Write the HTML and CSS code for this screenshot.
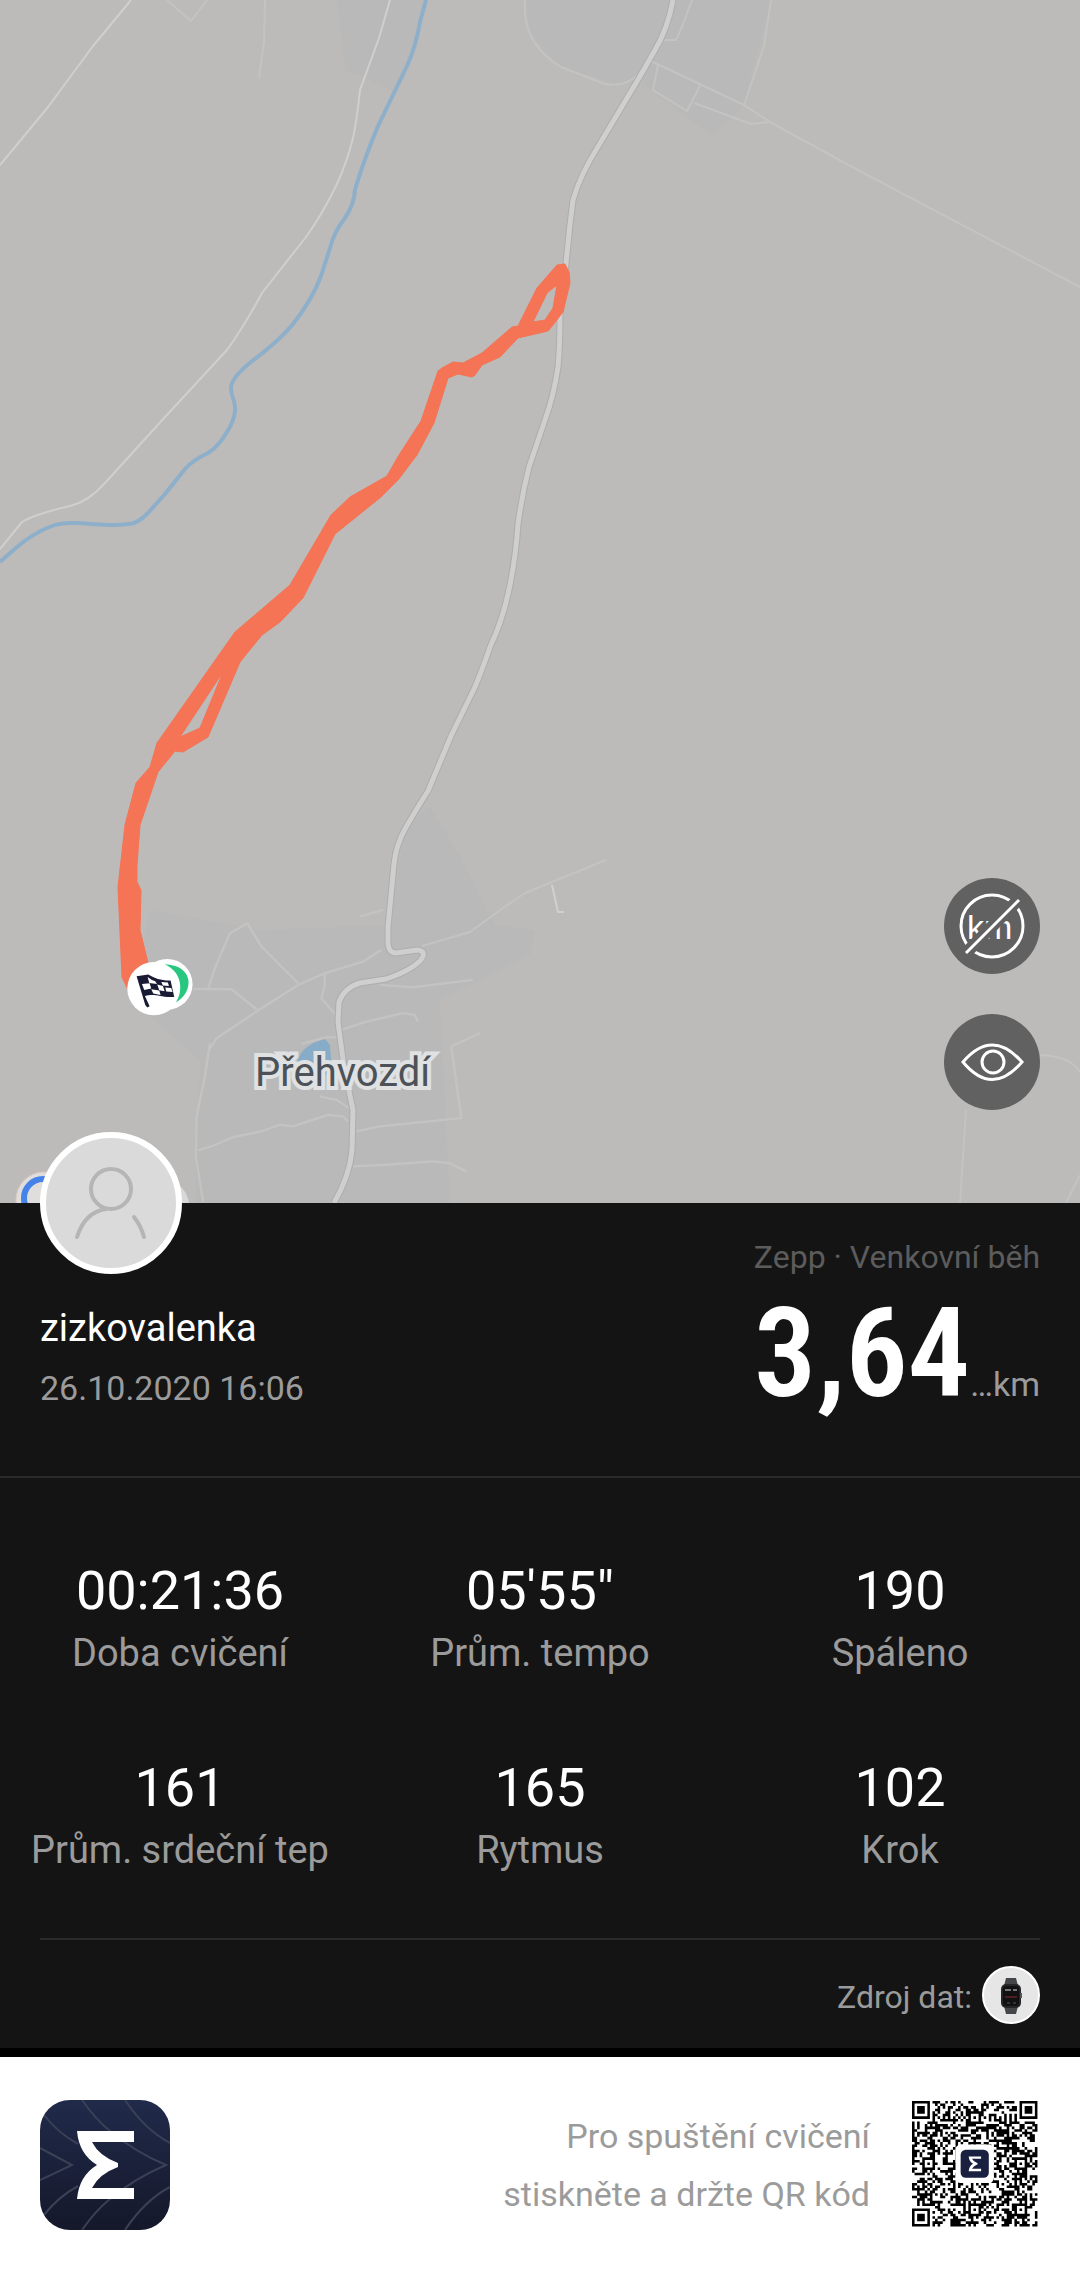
FILE: index.html
```html
<!DOCTYPE html>
<html lang="cs">
<head>
    <meta charset="utf-8">
    <meta name="viewport" content="width=device-width">
    <title>Zepp - Venkovní běh</title>
    <link rel="stylesheet" href="styles.css">
    <script src="script.js" defer></script>
</head>
<body>
    <!-- map: start -->
    <section class="map">
        <svg class="mapImg" viewBox="0 0 1080 1203" role="img" aria-label="Mapa trasy">
            <rect width="1080" height="1203" fill="#bcbbba"/>
            <!-- built-up areas -->
            <g fill="#bab9b9">
                <path d="M337 0H426L408 63 393 92 370 80 345 70z"/>
                <path d="M525 0H673L662 40 640 76 616 84 561 67 530 34z"/>
                <path d="M673 0H771L744 105 712 136 650 90 640 76z"/>
                <path d="M150 910L260 930 388 925 405 830 430 806 462 860 495 925 535 930 530 955 440 1000 450 1203H195L200 1060 130 1000z"/>
            </g>
            <!-- paths -->
            <g class="path">
                <path d="M167 0L191 21 207 0M265 0L264 42 259 78M525 0Q524 20 530 34 540 55 561 67L605 84Q625 88 640 73"/>
                <path d="M651 61L744 105M771 0L764 46 744 105 770 122 854 168 1080 287M692 0L682 27 676 40H664M658 65L653 90 687 111 701 84M694 103L751 124 770 122"/>
                <path d="M422 946L470 932 503 908 525 893 552 882 606 860M960 1203L966 1110M1040 1055Q1070 1056 1080 1072M1080 1175L1066 1203"/>
                <path d="M552 885L558 912H564" stroke="#d0d0d0"/>
            </g>
            <g class="path thick" transform="translate(80 900) scale(.333)">
                <path d="M340 267L455 268 530 328M385 265L405 205 450 100 503 70 545 140 655 250M385 455L410 415 530 335 655 255 735 220 850 185 905 150M735 220L735 255 725 295 768 345M665 432L740 412 780 413M390 430L375 530 350 650 348 770 370 908M355 752L400 738 460 712 545 695 600 675 640 680 745 645 790 650 805 665M830 695L900 680 1145 655 1115 440 1200 400M820 800L920 795 1060 785 1110 790 1160 815M785 390L860 365 970 340 1005 345 1015 365M900 255L1000 262 1180 240M720 590L770 600 808 625M840 50L910 30"/>
            </g>
            <!-- roads -->
            <path class="road thin" d="M131 0L93 46 48 107 0 165M390 0L379 38 360 90Q357 120 353 138 347 162 337 184 322 215 306 237L262 293Q245 325 227 350L165 417 105 483Q88 502 70 506 35 514 22 522L0 549"/>
            <path class="roadEdge" d="M673 0Q668 28 655 50L639 78 599 145Q580 175 573 200 569 230 566 264L560 314Q560 345 558 367 554 395 545 420L529 467Q522 495 518 524 516 555 510 585 503 620 490 647 484 665 475 687L451 736 428 791Q417 808 405 829 396 845 394 864L388 927V944Q389 953 396 953L417 950Q428 951 420 961 410 971 386 979L360 983Q345 987 339 1002L338 1022 344 1067 353 1110 352 1150Q350 1175 334 1203"/>
            <path class="road" d="M673 0Q668 28 655 50L639 78 599 145Q580 175 573 200 569 230 566 264L560 314Q560 345 558 367 554 395 545 420L529 467Q522 495 518 524 516 555 510 585 503 620 490 647 484 665 475 687L451 736 428 791Q417 808 405 829 396 845 394 864L388 927V944Q389 953 396 953L417 950Q428 951 420 961 410 971 386 979L360 983Q345 987 339 1002L338 1022 344 1067 353 1110 352 1150Q350 1175 334 1203"/>
            <!-- water -->
            <path class="river" d="M426 0L420 22Q416 46 407 66L378 126Q362 165 355 190 354 205 345 218 334 232 330 248L321 276Q312 300 293 324 280 340 251 362 231 378 231 388C231 398 236 400 235 411Q234 421 227 432 218 447 208 453 193 460 185 469L165 494 148 513Q137 524 129 524C105 527 95 523 72 523Q60 523 52 526 35 532 17 547L0 562"/>
            <path d="M298 1060Q302 1045 325 1039L330 1045 332 1075H298z" fill="#87acc8"/>
            <text class="place" x="255" y="1086">Přehvozdí</text>
            <!-- track -->
            <path class="track" fill-rule="evenodd" d="M565 264L557 265 537 288 518 326 512 327 482 353 463 363 453 362 442 368 438 371 421 421 399 455 387 476 350 497 331 515 290 585 235 632 157 743 150 767 136 783 125 825 118 887 122 977 128 990 150 985 148 963 140 930 141 890 137 882V865L140 825 158 772 175 751 183 752 208 737 240 662 262 635 280 622 303 598 335 534 381 497 398 480 417 455 434 423 448 378 458 374 472 377 475 375 482 365 500 357 518 338 548 331 553 325 563 312 570 283 569 272z
                M557 285L547 293 533 322 545 320 553 308zM223 672L200 728 180 737z"/>
            <g transform="translate(80 900) scale(.333)">
                <circle cx="262" cy="253" r="76" fill="#fff"/>
                <circle cx="222" cy="266" r="80" fill="#fff"/>
                <path d="M254 193C342 195 345 275 288 308 312 270 305 215 254 193z" fill="#27c77f"/>
                <path d="M170 229L205 224C225 236 245 243 272 242L283 291C240 294 230 280 195 288L209 319 202 323 196 315z" fill="#191a33"/>
                <g fill="#fff">
                    <path d="M203 231Q214 240 226 244L231 252 208 249zM244 246L264 248 267 258 249 257z"/>
                    <path d="M186 252L209 250 214 266 193 270zM232 254L249 258 254 274 238 271z"/>
                    <path d="M214 268L238 272 242 285 220 281zM256 263L274 264 278 276 259 275z"/>
                </g>
            </g>
            <!-- map provider badge -->
            <circle cx="44" cy="1200" r="28" fill="#e0dedd" stroke="#dcc9bf" stroke-width="1"/>
            <circle cx="43" cy="1198" r="19" fill="none" stroke="#4583e8" stroke-width="6"/>
            <path d="M176 1180L182 1188Q188 1195 189 1203H174z" fill="#d8d8d8"/>
        </svg>
        <div class="mapBtns">
            <button type="button" aria-label="Skrýt kilometry">
                <svg viewBox="0 0 96 96">
                    <circle cx="48" cy="48" r="31"/>
                    <text class="km" x="23" y="61">km</text>
                    <path class="cut" d="M18 79L79 17"/>
                    <path d="M22 75L75 22"/>
                </svg>
            </button>
            <button type="button" aria-label="Zobrazit mapu">
                <svg viewBox="0 0 96 96">
                    <path d="M19 48Q48 14 78 48 48 83 19 48z"/>
                    <circle cx="49" cy="48" r="11"/>
                </svg>
            </button>
        </div>
    </section>
    <!-- map: end -->
    <!-- panel: start -->
    <main class="panel">
        <section class="summary">
            <div class="user">
                <svg class="avatar" viewBox="0 0 142 142" role="img" aria-label="Profil">
                    <circle cx="71" cy="71" r="68" fill="#dadada" stroke="#fff" stroke-width="6"/>
                    <g fill="none" stroke="#b5b5b5" stroke-width="4" stroke-linecap="round">
                        <circle cx="71" cy="57" r="20"/>
                        <path d="M37 105Q45 80 66 77M94 85Q101 94 104 105"/>
                    </g>
                </svg>
                <h1>zizkovalenka</h1>
                <time datetime="2020-10-26T16:06">26.10.2020 16:06</time>
            </div>
            <div class="distance">
                <p class="type">Zepp · Venkovní běh</p>
                <p class="total"><strong>3,64</strong><span>…km</span></p>
            </div>
        </section>
        <dl class="stats">
            <div><dt>Doba cvičení</dt><dd>00:21:36</dd></div>
            <div><dt>Prům. tempo</dt><dd>05'55"</dd></div>
            <div><dt>Spáleno</dt><dd>190</dd></div>
            <div><dt>Prům. srdeční tep</dt><dd>161</dd></div>
            <div><dt>Rytmus</dt><dd>165</dd></div>
            <div><dt>Krok</dt><dd>102</dd></div>
        </dl>
        <div class="source">
            <span>Zdroj dat:</span>
            <svg viewBox="0 0 58 58" role="img" aria-label="Hodinky">
                <circle cx="29" cy="29" r="28" fill="#e6e6e6" stroke="#fff" stroke-width="2"/>
                <path d="M24 12H34L36 20H22zM22 40H36L34 48H24z" fill="#45464a"/>
                <rect x="19" y="18" width="20" height="24" rx="5" fill="#26262a"/>
                <rect x="21" y="20" width="16" height="20" rx="3" fill="#111"/>
                <path d="M39 27V32" stroke="#555" stroke-width="2"/>
                <path d="M23 24H29M31 24H35" stroke="#777" stroke-width="2"/>
                <path d="M23 31H35" stroke="#4c2022" stroke-width="2"/>
                <path d="M25 37H28M31 37H34" stroke="#555"/>
            </svg>
        </div>
    </main>
    <!-- panel: end -->
    <footer class="share">
        <svg class="logo" viewBox="0 0 130 130" role="img" aria-label="Zepp">
            <defs>
                <linearGradient id="navy" x1="0" y1="0" x2="0" y2="1">
                    <stop offset="0" stop-color="#202a4a"/>
                    <stop offset="1" stop-color="#15182a"/>
                </linearGradient>
                <clipPath id="tile"><rect width="130" height="130" rx="30"/></clipPath>
                <path id="sigma" d="M37 31H94V42H52Q59 56 78 63V67Q59 74 52 88H94V99H37Q39 76 57 65 39 54 37 31z"/>
            </defs>
            <g clip-path="url(#tile)">
                <rect width="130" height="130" fill="url(#navy)"/>
                <path d="M42 0Q56 20 70 31 95 52 126 65 95 78 70 99 56 110 42 130M85 0Q105 30 130 43M130 87Q105 100 85 130M4 15Q18 33 38 44M4 115Q18 97 38 86M0 48L32 65 0 80" fill="none" stroke="#3a4055" stroke-width="2"/>
            </g>
            <use href="#sigma" fill="#fff"/>
        </svg>
        <p>Pro spuštění cvičení<br>stiskněte a držte QR kód</p>
        <svg class="qr" viewBox="0 0 50 50" role="img" aria-label="QR kód">
            <path id="qrDots"/>
            <rect x="17" y="17" width="15" height="15" rx="2" fill="#fff"/>
            <rect x="19" y="19" width="11" height="11" rx="2" fill="#1a2140"/>
            <use href="#sigma" fill="#fff" transform="translate(19 19) scale(.085)"/>
        </svg>
    </footer>
</body>
</html>
```
FILE: styles.css
```css
* {margin: 0; padding: 0; box-sizing: border-box;}
body {font: 34px/40px Roboto, "Liberation Sans", sans-serif; background: #fff; color: #9b9b9b;}
svg {display: block;}

/* map */
.map {position: relative;}
.mapImg {width: 100%; height: auto;}
.path {fill: none; stroke: #c3c3c2; stroke-width: 2; stroke-linejoin: round;}
.path.thick {stroke-width: 7;}
.road {fill: none; stroke: #cfcfcf; stroke-width: 5; stroke-linejoin: round;}
.road.thin {stroke-width: 2;}
.roadEdge {fill: none; stroke: #adadad; stroke-width: 7; stroke-linejoin: round;}
.river {fill: none; stroke: #8eafca; stroke-width: 4; stroke-linejoin: round;}
.place {font-size: 40px; fill: #4c5257; stroke: #dfe1e3; stroke-width: 8; paint-order: stroke;}
.track {fill: #f47455; stroke: #f47455; stroke-width: 1; stroke-linejoin: round;}

.mapBtns {position: absolute; right: 40px; bottom: 93px; display: flex; flex-direction: column; gap: 40px;}
.mapBtns button {width: 96px; height: 96px; border: 0; border-radius: 50%; background: #616161; cursor: pointer;}
.mapBtns svg {fill: none; stroke: #fff; stroke-width: 3;}
.mapBtns .km {font-size: 34px; font-weight: 400; fill: #fff; stroke: none;}
.mapBtns .cut {stroke: #616161; stroke-width: 12;}

/* panel */
.panel {background: #141414; border-bottom: 9px solid #000;}
.summary {display: flex; justify-content: space-between; padding: 0 40px; min-height: 275px; border-bottom: 2px solid #2a2a2a;}
.avatar {position: relative; width: 142px; height: 142px; margin-top: -71px;}
.user h1 {font-size: 38px; line-height: 48px; font-weight: 400; color: #fff; margin: 30px 0 16px;}
.user time {display: block;}
.distance {text-align: right; padding-top: 34px;}
.type {font-size: 32px; color: #5c5c5c;}
.total {line-height: 116px; margin-top: 19px; white-space: nowrap;}
.total strong {font: 600 124px/116px "Roboto Condensed", "Liberation Sans Narrow", Roboto, sans-serif; color: #fff;}

.stats {display: grid; grid-template-columns: repeat(3, 1fr); row-gap: 76px; padding: 81px 0 61px; text-align: center;}
.stats div {display: flex; flex-direction: column-reverse; gap: 4px;}
.stats dt {font-size: 38px; line-height: 53px;}
.stats dd {font-size: 54px; line-height: 64px; color: #fff;}

.source {display: flex; justify-content: flex-end; align-items: center; gap: 10px; margin: 0 40px; padding: 26px 0 24px; border-top: 2px solid #2a2a2a; font-size: 32px;}
.source span {padding-top: 4px;}
.source svg {width: 58px; height: 58px;}

/* share */
.share {display: flex; align-items: center; padding: 43px 40px;}
.logo {width: 130px; height: 130px;}
.share p {margin-left: auto; text-align: right; line-height: 58px;}
.qr {width: 128px; height: 128px; margin-left: 42px;}
```
FILE: script.js
```js
// 49 x 49 code, drawn as one path
const size = 49;
let seed = 2020;
const rand = () => {
    seed = (seed * 1103515245 + 12345) % 2147483648;
    return seed / 2147483648;
};

// square rings of the corner marks and the small marks
const rings = [
    [3, 3, 3], [size - 4, 3, 3], [3, size - 4, 3],
    [24, 6, 2], [6, 24, 2], [42, 24, 2], [24, 42, 2], [42, 42, 2]
];

const isDark = (x, y) => {
    for (const [cx, cy, r] of rings) {
        const d = Math.max(Math.abs(x - cx), Math.abs(y - cy));
        if (r === 3 && d <= 4) return d === 3 || d <= 1;
        if (r === 2 && d <= 2) return d !== 1;
    }
    if (x === 6 || y === 6) return (x + y) % 2 === 0;
    return rand() < 0.5;
};

let d = "";
for (let y = 0; y < size; y++) {
    for (let x = 0; x < size; x++) {
        if (isDark(x, y)) d += `M${x} ${y}h1v1h-1z`;
    }
}
document.getElementById("qrDots").setAttribute("d", d);
```
